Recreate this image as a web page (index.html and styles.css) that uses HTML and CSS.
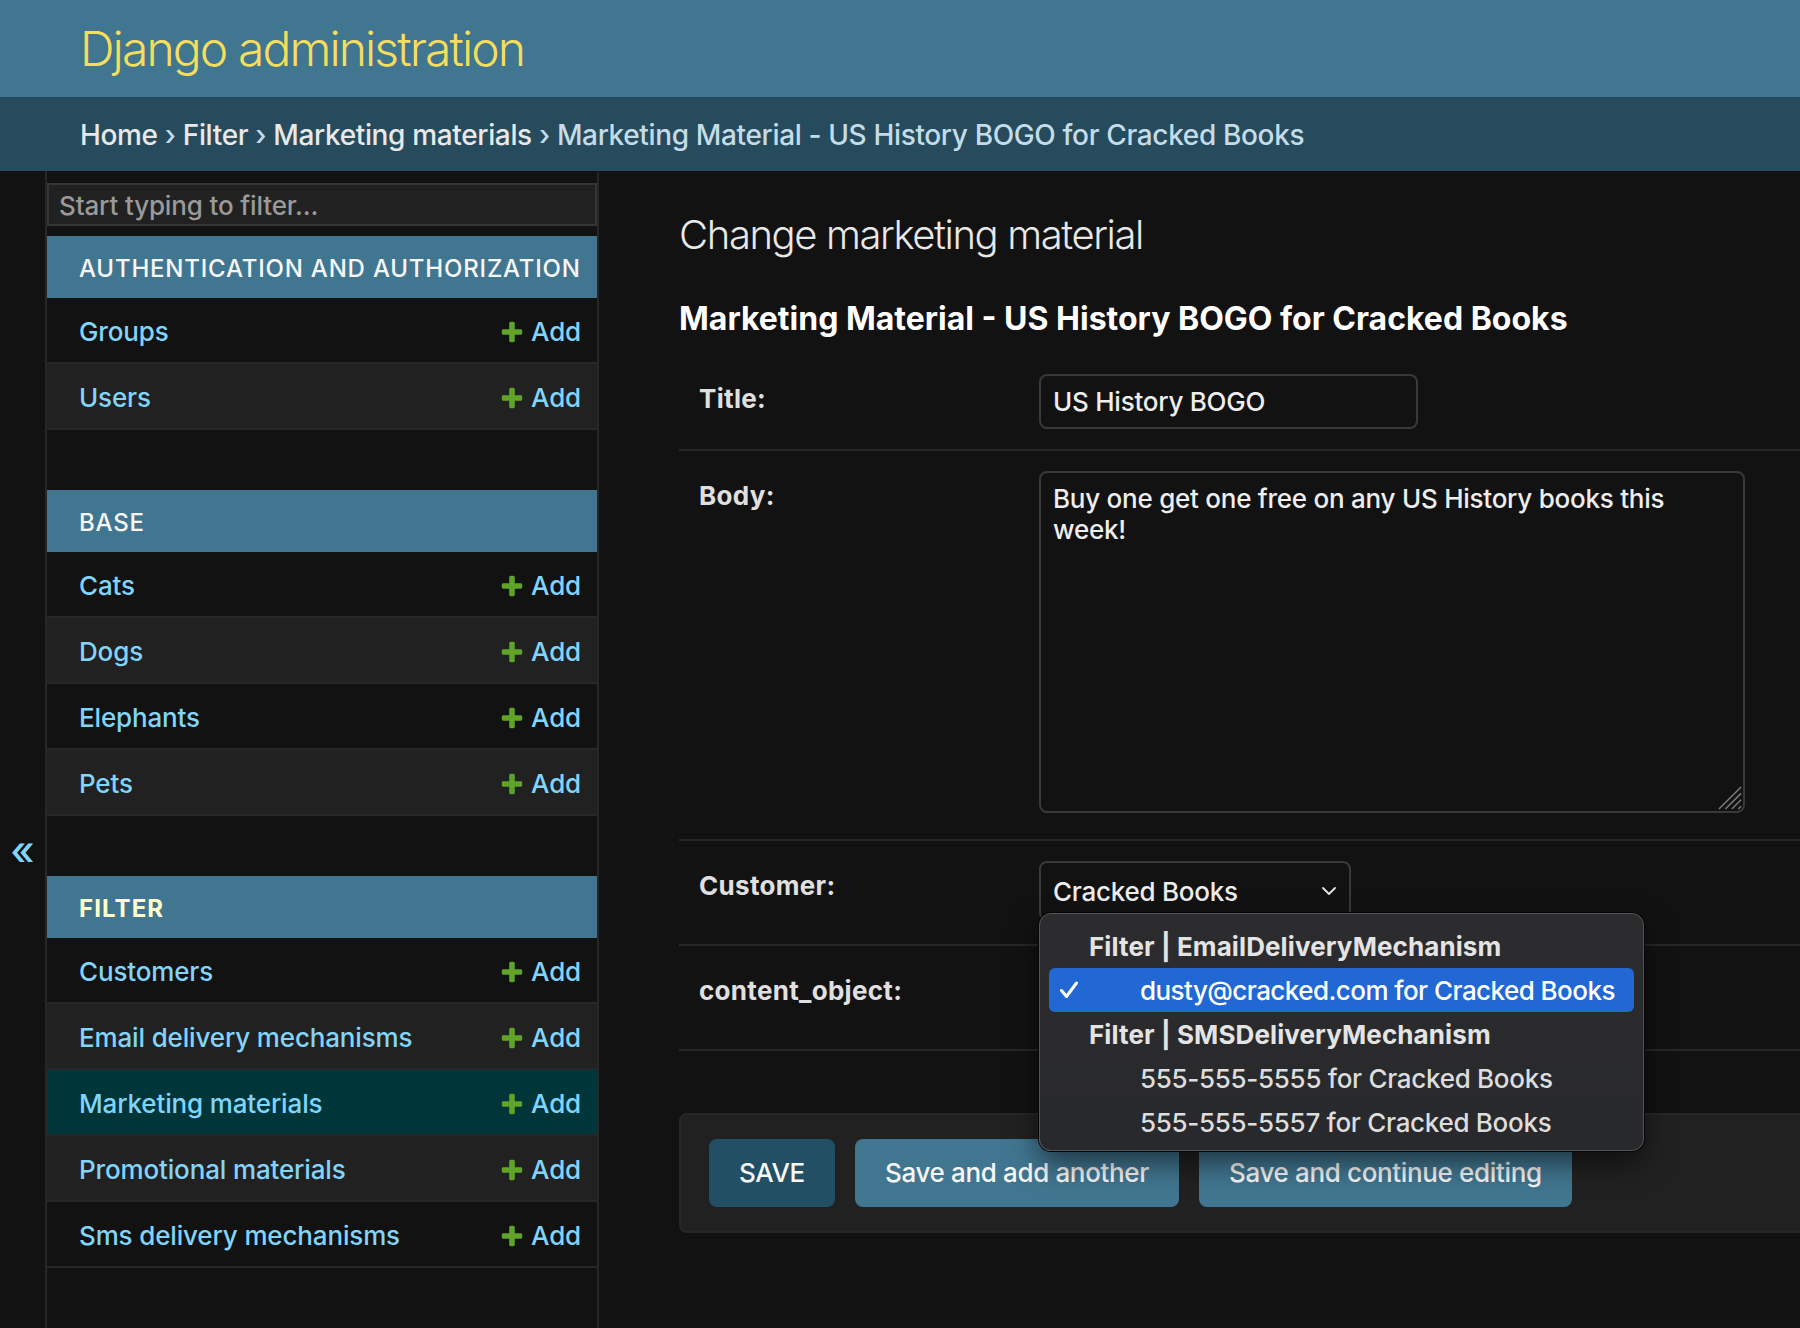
FILE: index.html
```html
<!DOCTYPE html>
<html lang="en">
<head>
<meta charset="utf-8">
<title>Change marketing material | Django site admin</title>
<link rel="stylesheet" href="styles.css">
</head>
<body>
<div class="container">
  <header class="header">
    <h1 class="site-name">Django administration</h1>
  </header>
  <nav class="breadcrumbs">
    <a href="#">Home</a> › <a href="#">Filter</a> › <a href="#">Marketing materials</a> › Marketing Material - US History BOGO for Cracked Books
  </nav>
  <div class="main">
    <div class="toggle-nav">«</div>
    <nav class="nav-sidebar">
      <input class="nav-filter" type="search" placeholder="Start typing to filter...">

      <div class="module">
        <div class="caption">Authentication and Authorization</div>
        <div class="row"><a class="name" href="#">Groups</a><a class="add" href="#"><svg class="plus" viewBox="0 0 1792 1792"><path d="M1600 796v192q0 40-28 68t-68 28h-416v416q0 40-28 68t-68 28h-192q-40 0-68-28t-28-68v-416h-416q-40 0-68-28t-28-68v-192q0-40 28-68t68-28h416v-416q0-40 28-68t68-28h192q40 0 68 28t28 68v416h416q40 0 68 28t28 68z"/></svg>Add</a></div>
        <div class="row"><a class="name" href="#">Users</a><a class="add" href="#"><svg class="plus" viewBox="0 0 1792 1792"><path d="M1600 796v192q0 40-28 68t-68 28h-416v416q0 40-28 68t-68 28h-192q-40 0-68-28t-28-68v-416h-416q-40 0-68-28t-28-68v-192q0-40 28-68t68-28h416v-416q0-40 28-68t68-28h192q40 0 68 28t28 68v416h416q40 0 68 28t28 68z"/></svg>Add</a></div>
      </div>

      <div class="module">
        <div class="caption">Base</div>
        <div class="row"><a class="name" href="#">Cats</a><a class="add" href="#"><svg class="plus" viewBox="0 0 1792 1792"><path d="M1600 796v192q0 40-28 68t-68 28h-416v416q0 40-28 68t-68 28h-192q-40 0-68-28t-28-68v-416h-416q-40 0-68-28t-28-68v-192q0-40 28-68t68-28h416v-416q0-40 28-68t68-28h192q40 0 68 28t28 68v416h416q40 0 68 28t28 68z"/></svg>Add</a></div>
        <div class="row"><a class="name" href="#">Dogs</a><a class="add" href="#"><svg class="plus" viewBox="0 0 1792 1792"><path d="M1600 796v192q0 40-28 68t-68 28h-416v416q0 40-28 68t-68 28h-192q-40 0-68-28t-28-68v-416h-416q-40 0-68-28t-28-68v-192q0-40 28-68t68-28h416v-416q0-40 28-68t68-28h192q40 0 68 28t28 68v416h416q40 0 68 28t28 68z"/></svg>Add</a></div>
        <div class="row"><a class="name" href="#">Elephants</a><a class="add" href="#"><svg class="plus" viewBox="0 0 1792 1792"><path d="M1600 796v192q0 40-28 68t-68 28h-416v416q0 40-28 68t-68 28h-192q-40 0-68-28t-28-68v-416h-416q-40 0-68-28t-28-68v-192q0-40 28-68t68-28h416v-416q0-40 28-68t68-28h192q40 0 68 28t28 68v416h416q40 0 68 28t28 68z"/></svg>Add</a></div>
        <div class="row"><a class="name" href="#">Pets</a><a class="add" href="#"><svg class="plus" viewBox="0 0 1792 1792"><path d="M1600 796v192q0 40-28 68t-68 28h-416v416q0 40-28 68t-68 28h-192q-40 0-68-28t-28-68v-416h-416q-40 0-68-28t-28-68v-192q0-40 28-68t68-28h416v-416q0-40 28-68t68-28h192q40 0 68 28t28 68v416h416q40 0 68 28t28 68z"/></svg>Add</a></div>
      </div>

      <div class="module">
        <div class="caption current">Filter</div>
        <div class="row"><a class="name" href="#">Customers</a><a class="add" href="#"><svg class="plus" viewBox="0 0 1792 1792"><path d="M1600 796v192q0 40-28 68t-68 28h-416v416q0 40-28 68t-68 28h-192q-40 0-68-28t-28-68v-416h-416q-40 0-68-28t-28-68v-192q0-40 28-68t68-28h416v-416q0-40 28-68t68-28h192q40 0 68 28t28 68v416h416q40 0 68 28t28 68z"/></svg>Add</a></div>
        <div class="row"><a class="name" href="#">Email delivery mechanisms</a><a class="add" href="#"><svg class="plus" viewBox="0 0 1792 1792"><path d="M1600 796v192q0 40-28 68t-68 28h-416v416q0 40-28 68t-68 28h-192q-40 0-68-28t-28-68v-416h-416q-40 0-68-28t-28-68v-192q0-40 28-68t68-28h416v-416q0-40 28-68t68-28h192q40 0 68 28t28 68v416h416q40 0 68 28t28 68z"/></svg>Add</a></div>
        <div class="row selected"><a class="name" href="#">Marketing materials</a><a class="add" href="#"><svg class="plus" viewBox="0 0 1792 1792"><path d="M1600 796v192q0 40-28 68t-68 28h-416v416q0 40-28 68t-68 28h-192q-40 0-68-28t-28-68v-416h-416q-40 0-68-28t-28-68v-192q0-40 28-68t68-28h416v-416q0-40 28-68t68-28h192q40 0 68 28t28 68v416h416q40 0 68 28t28 68z"/></svg>Add</a></div>
        <div class="row"><a class="name" href="#">Promotional materials</a><a class="add" href="#"><svg class="plus" viewBox="0 0 1792 1792"><path d="M1600 796v192q0 40-28 68t-68 28h-416v416q0 40-28 68t-68 28h-192q-40 0-68-28t-28-68v-416h-416q-40 0-68-28t-28-68v-192q0-40 28-68t68-28h416v-416q0-40 28-68t68-28h192q40 0 68 28t28 68v416h416q40 0 68 28t28 68z"/></svg>Add</a></div>
        <div class="row"><a class="name" href="#">Sms delivery mechanisms</a><a class="add" href="#"><svg class="plus" viewBox="0 0 1792 1792"><path d="M1600 796v192q0 40-28 68t-68 28h-416v416q0 40-28 68t-68 28h-192q-40 0-68-28t-28-68v-416h-416q-40 0-68-28t-28-68v-192q0-40 28-68t68-28h416v-416q0-40 28-68t68-28h192q40 0 68 28t28 68v416h416q40 0 68 28t28 68z"/></svg>Add</a></div>
      </div>
    </nav>

    <div class="content">
      <h1 class="page-title">Change marketing material</h1>
      <h2 class="subtitle">Marketing Material - US History BOGO for Cracked Books</h2>
      <form>
        <fieldset class="fieldset">
          <div class="form-row">
            <label class="label">Title:</label>
            <input class="text-input" type="text" value="US History BOGO">
          </div>
          <div class="form-row">
            <label class="label">Body:</label>
            <div class="textarea-wrap">
              <textarea class="textarea">Buy one get one free on any US History books this week!</textarea>
              <svg class="grip" viewBox="0 0 26 26"><path d="M1 25 L25 1 M8 25 L25 8 M15 25 L25 15 M22 25 L25 22" stroke="#7c7c7c" stroke-width="1.6" fill="none"/></svg>
            </div>
          </div>
          <div class="form-row">
            <label class="label">Customer:</label>
            <div class="select customer-select">
              <span>Cracked Books</span>
              <svg class="chevron" viewBox="0 0 16 10"><path d="M2 2 L8 8 L14 2" fill="none" stroke="#e6e6e6" stroke-width="1.8" stroke-linecap="round" stroke-linejoin="round"/></svg>
            </div>
          </div>
          <div class="form-row">
            <label class="label">content_object:</label>
            <div class="field-wrap">
              <div class="select object-select"></div>
              <div class="popup">
                <div class="opt group">Filter | EmailDeliveryMechanism</div>
                <div class="opt chosen"><svg class="check" viewBox="0 0 20 18"><path d="M2.5 9.5 L7.5 15.5 L17.5 2" fill="none" stroke="#ffffff" stroke-width="3" stroke-linecap="round" stroke-linejoin="round"/></svg><span>dusty@cracked.com for Cracked Books</span></div>
                <div class="opt group">Filter | SMSDeliveryMechanism</div>
                <div class="opt">555-555-5555 for Cracked Books</div>
                <div class="opt">555-555-5557 for Cracked Books</div>
              </div>
            </div>
          </div>
        </fieldset>
        <div class="submit-row">
          <button class="btn btn-default" type="button">Save</button>
          <button class="btn" type="button">Save and add another</button>
          <button class="btn" type="button">Save and continue editing</button>
        </div>
      </form>
    </div>
  </div>
</div>
</body>
</html>
```

FILE: styles.css
```css
:root { color-scheme: dark; }
* { box-sizing: border-box; }
html, body { margin: 0; padding: 0; overflow: hidden; }
body {
  width: 1800px;
  height: 1328px;
  background: #121212;
  color: #eeeeee;
  font-family: Inter, "Noto Sans", "Liberation Sans", sans-serif;
  font-size: 26px;
}
a { color: #81d4fa; text-decoration: none; }

.header {
  height: 97px;
  padding: 20px 80px;
  background: #417690;
  display: flex;
  align-items: center;
}
.site-name {
  margin: 0;
  font-size: 48px;
  font-weight: 300;
  line-height: 57px;
  color: #f5dd5d;
  letter-spacing: -1.9px;
}

.breadcrumbs {
  height: 74px;
  padding: 21px 80px 19px;
  background: #264b5d;
  color: #c4dce8;
  font-size: 28px;
  font-weight: 500;
  line-height: 34px;
  letter-spacing: -0.35px;
}
.breadcrumbs a { color: #e8e8e8; }

.main {
  display: flex;
  height: 1157px;
}

.toggle-nav {
  flex: 0 0 47px;
  border-right: 2px solid #272727;
  background: #121212;
  color: #81d4fa;
  font-size: 40px;
  font-weight: 500;
  line-height: 48px;
  text-align: center;
  padding-top: 656px;
}

.nav-sidebar {
  flex: 0 0 552px;
  border-top: 2px solid transparent;
  border-right: 2px solid #272727;
  background: #121212;
}
.nav-filter {
  display: block;
  width: 100%;
  height: 43px;
  margin: 10px 0;
  padding: 5px 10px 3px;
  border: 2px solid #353535;
  border-radius: 0;
  background: #212121;
  color: #eeeeee;
  font-family: inherit;
  font-size: 26px;
  font-weight: 500;
  line-height: 31px;
  letter-spacing: -0.15px;
  outline: none;
  -webkit-appearance: none;
  appearance: none;
}
.nav-filter::placeholder { color: #9a9a9a; }

.module { margin-bottom: 60px; }
.caption {
  height: 62px;
  padding: 18px 16px 14px 32px;
  background: #417690;
  color: #f7f7f7;
  font-size: 24px;
  font-weight: 500;
  line-height: 30px;
  letter-spacing: 0.8px;
  text-transform: uppercase;
  white-space: nowrap;
}
.caption.current { color: #ffffcc; font-weight: 700; letter-spacing: 1.1px; }

.row {
  display: flex;
  justify-content: space-between;
  align-items: center;
  height: 66px;
  padding: 4px 16px 0 32px;
  border-bottom: 2px solid #272727;
  background: #121212;
  font-weight: 500;
  line-height: 32px;
  letter-spacing: -0.15px;
  white-space: nowrap;
}
.row:nth-child(odd) { background: #212121; }
.row.selected { background: #00363a; }
.add { display: flex; align-items: center; }
.plus {
  width: 26px;
  height: 26px;
  margin-right: 6px;
  fill: #5fa428;
}

.content {
  flex: 0 0 1320px;
  padding: 40px 80px;
}
.page-title {
  margin: 0 0 40px;
  font-size: 40px;
  font-weight: 300;
  line-height: 48px;
  color: #e8e8e8;
  letter-spacing: -1.4px;
}
.subtitle {
  margin: 0 0 15px;
  font-size: 32px;
  font-weight: 700;
  line-height: 40px;
  color: #ffffff;
  letter-spacing: 0;
}

.fieldset {
  margin: 0 0 62px;
  padding: 0;
  border: 0;
  min-width: 0;
}
.form-row {
  display: flex;
  align-items: flex-start;
  padding: 20px;
  border-bottom: 2px solid #272727;
}
.label {
  flex: 0 0 340px;
  padding: 8px 20px 0 0;
  font-weight: 700;
  line-height: 34px;
  color: #e0e0e0;
  letter-spacing: 0.3px;
}
.text-input, .textarea, .select {
  border: 2px solid #393939;
  border-radius: 8px;
  background: #121212;
  color: #eeeeee;
  font-family: inherit;
  font-size: 26px;
  font-weight: 500;
  line-height: 31px;
  letter-spacing: -0.25px;
}
.text-input {
  width: 379px;
  height: 55px;
  padding: 10px 12px;
  outline: none;
}
.textarea-wrap {
  position: relative;
  margin-bottom: 6px;
}
.textarea {
  display: block;
  width: 706px;
  height: 342px;
  padding: 10px 12px;
  resize: none;
  outline: none;
}
.grip {
  position: absolute;
  right: 3px;
  bottom: 3px;
  width: 24px;
  height: 24px;
}
.select {
  height: 60px;
  margin-bottom: 3px;
  padding: 0 12px 0 12px;
  display: flex;
  align-items: center;
  justify-content: space-between;
}
.customer-select { width: 312px; }
.chevron { width: 16px; height: 10px; }

.field-wrap { position: relative; }
.object-select { width: 560px; }

.popup {
  position: absolute;
  left: 0;
  top: -53px;
  z-index: 10;
  width: 605px;
  height: 238px;
  padding: 10px 9px 8px;
  border: 1px solid #555555;
  border-radius: 12px;
  background: linear-gradient(180deg, #2c2c2e 0%, #28292c 100%);
  box-shadow: 0 0 0 1px #050505, 0 12px 30px rgba(0, 0, 0, 0.55);
  color: #dddddd;
  font-size: 26px;
  font-weight: 500;
  letter-spacing: -0.3px;
}
.opt {
  height: 44px;
  display: flex;
  align-items: center;
  padding-left: 91px;
  border-radius: 6px;
  white-space: nowrap;
}
.opt.group { padding-left: 40px; font-weight: 700; color: #e4e4e4; letter-spacing: 0.1px; }
.opt.chosen {
  padding-left: 10px;
  background: #2268d4;
  color: #ffffff;
  letter-spacing: -0.55px;
}
.check { width: 20px; height: 18px; margin-right: 61px; }

.submit-row {
  display: flex;
  gap: 20px;
  padding: 24px 28px;
  background: #212121;
  border: 2px solid #272727;
  border-radius: 8px;
}
.btn {
  height: 68px;
  padding: 20px 30px;
  border: 0;
  border-radius: 8px;
  background: #417690;
  color: #f7f7f7;
  font-family: inherit;
  font-size: 26px;
  font-weight: 500;
  line-height: 28px;
  letter-spacing: -0.35px;
}
.btn-default { background: #234f64; text-transform: uppercase; }
```
